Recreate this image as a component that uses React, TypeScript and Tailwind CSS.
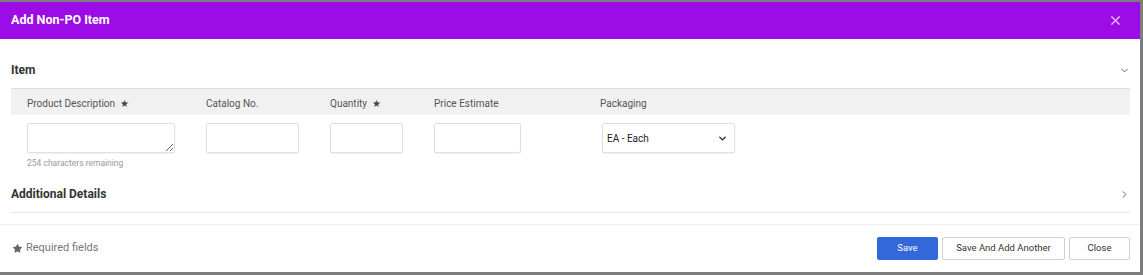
import { X, ChevronDown, ChevronRight, Star } from "lucide-react";

const font = { fontFamily: "Roboto, 'Liberation Sans', sans-serif" };

function Label({ text, required }: { text: string; required?: boolean }) {
  return (
    <span className="text-[10px] text-[#555]">
      {text}
      {required && <span className="ml-[5px] text-[10px] text-[#444]">★</span>}
    </span>
  );
}

const box = "block h-[30px] border border-[#e0e0e0] rounded-[2px] shadow-[0_1px_2px_rgba(0,0,0,0.06)] outline-none";

export default function App() {
  return (
    <div className="w-[1143px] h-[275px] bg-[#7d7d7d] pt-[2px]" style={font}>
      <div className="w-[1140px] h-[270px] bg-white flex flex-col">
        {/* Header */}
        <div className="h-[37px] bg-[#9c0ce6] flex items-center justify-between pl-[11px] pr-[17px]">
          <span className="text-[12.5px] font-bold text-white">Add Non-PO Item</span>
          <X size={15} strokeWidth={1.8} className="text-[#f6d2ff]" />
        </div>

        {/* Item section */}
        <div className="px-[11px] pr-[10px]">
          <div className="h-[36px] mt-[13px] flex items-center justify-between">
            <span className="text-[12px] font-bold text-[#333]">Item</span>
            <ChevronDown size={11} className="text-[#555]" />
          </div>

          <div className="h-[27px] bg-[#f1f1f1] border-t border-[#dcdcdc] flex items-center pl-[16px]">
            <div className="w-[179px]"><Label text="Product Description" required /></div>
            <div className="w-[124px]"><Label text="Catalog No." /></div>
            <div className="w-[104px]"><Label text="Quantity" required /></div>
            <div className="w-[166px]"><Label text="Price Estimate" /></div>
            <div><Label text="Packaging" /></div>
          </div>

          <div className="flex pl-[16px] pt-[8px]">
            <div className="w-[179px]">
              <textarea className={`${box} w-[148px]`} />
              <div className="text-[8.5px] text-[#999] mt-[4px]">254 characters remaining</div>
            </div>
            <div className="w-[124px]">
              <input className={`${box} w-[93px]`} />
            </div>
            <div className="w-[104px]">
              <input className={`${box} w-[73px]`} />
            </div>
            <div className="w-[168px]">
              <input className={`${box} w-[87px]`} />
            </div>
            <div className="w-[133px] h-[30px] border border-[#e0e0e0] rounded-[2px] shadow-[0_1px_2px_rgba(0,0,0,0.06)] flex items-center justify-between pl-[4px] pr-[6px]">
              <span className="text-[10px] text-[#222]">EA - Each</span>
              <ChevronDown size={11} strokeWidth={3} className="text-[#222]" />
            </div>
          </div>

          <div className="h-[36px] mt-[7px] flex items-center justify-between border-b border-[#e6e6e6]">
            <span className="text-[12px] font-bold text-[#333]">Additional Details</span>
            <ChevronRight size={11} className="text-[#555]" />
          </div>
        </div>

        <div className="mt-[11px] border-t border-[#eeeeee] flex-1 flex items-center justify-between pl-[12px] pr-[10px]">
          <div className="flex items-center gap-[3px] text-[11px] text-[#777]">
            <Star size={11} fill="#666" strokeWidth={0} />
            <span>Required fields</span>
          </div>
          <div className="flex items-center gap-[4px]">
            <button className="w-[61px] h-[23px] bg-[#3468d8] rounded-[2px] text-white text-[9.5px]">Save</button>
            <button className="w-[123px] h-[23px] bg-white border border-[#d0d0d0] rounded-[2px] text-[#333] text-[9.5px]">Save And Add Another</button>
            <button className="w-[61px] h-[23px] bg-white border border-[#d0d0d0] rounded-[2px] text-[#333] text-[9.5px]">Close</button>
          </div>
        </div>
      </div>
    </div>
  );
}
